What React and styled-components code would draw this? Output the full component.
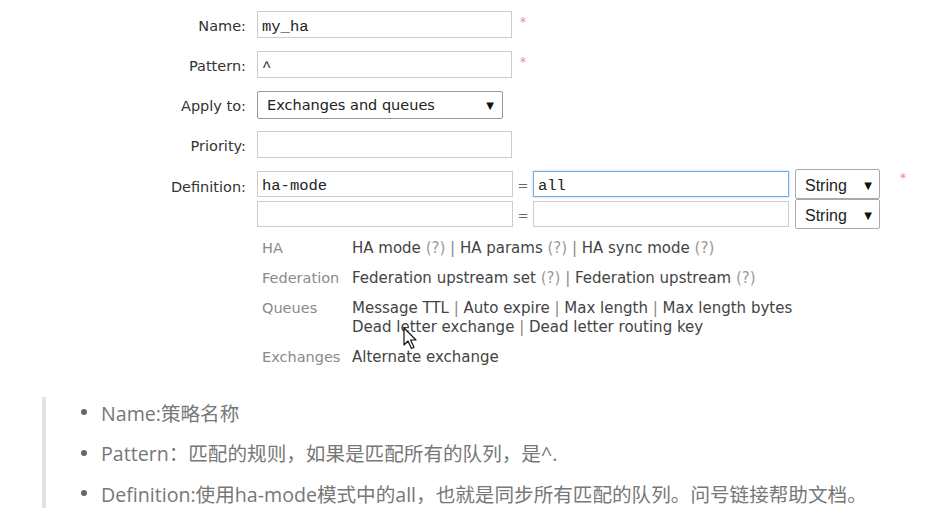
import React from "react";
import styled, { createGlobalStyle } from "styled-components";

const helpRows = [
  {
    cat: "HA",
    lines: [
      [
        ["HA mode", true],
        ["HA params", true],
        ["HA sync mode", true]
      ]
    ]
  },
  {
    cat: "Federation",
    lines: [
      [
        ["Federation upstream set", true],
        ["Federation upstream", true]
      ]
    ]
  },
  {
    cat: "Queues",
    lines: [
      [["Message TTL"], ["Auto expire"], ["Max length"], ["Max length bytes"]],
      [["Dead letter exchange"], ["Dead letter routing key"]]
    ]
  },
  { cat: "Exchanges", lines: [[["Alternate exchange"]]] }
];

const notes = [
  "Name:策略名称",
  "Pattern：匹配的规则，如果是匹配所有的队列，是^.",
  "Definition:使用ha-mode模式中的all，也就是同步所有匹配的队列。问号链接帮助文档。"
];

function HelpLine({ links }) {
  return (
    <Line>
      {links.map(([text, help], i) => (
        <React.Fragment key={text}>
          {i > 0 && <Sep> | </Sep>}
          <span>
            {text}
            {help && <Hint> (?)</Hint>}
          </span>
        </React.Fragment>
      ))}
    </Line>
  );
}

function Cursor() {
  return (
    <CursorIcon width="16" height="24" viewBox="0 0 16 24">
      <path
        d="M1 1 L1 18 L5 14 L8.5 21.5 L11 20.3 L7.6 13 L13 13 Z"
        fill="#fff"
        stroke="#111"
        strokeWidth="1.2"
        strokeLinejoin="round"
      />
    </CursorIcon>
  );
}

export default function App() {
  return (
    <Page>
      <GlobalStyle />
      <Form>
        <Row>
          <Label>Name:</Label>
          <TextInput defaultValue="my_ha" />
          <Required>*</Required>
        </Row>
        <Row>
          <Label>Pattern:</Label>
          <TextInput defaultValue="^" />
          <Required>*</Required>
        </Row>
        <Row>
          <Label>Apply to:</Label>
          <Select>
            <span>Exchanges and queues</span>
            <Arrow>▼</Arrow>
          </Select>
        </Row>
        <Row>
          <Label>Priority:</Label>
          <TextInput defaultValue="" />
        </Row>
        <DefRow>
          <DefLabel>Definition:</DefLabel>
          <DefLines>
            <DefLine>
              <PairInput defaultValue="ha-mode" />
              <Eq>=</Eq>
              <PairInput defaultValue="all" $focused />
              <TypeSelect>
                <span>String</span>
                <Arrow>▼</Arrow>
              </TypeSelect>
              <Required $wide>*</Required>
            </DefLine>
            <DefLine>
              <PairInput defaultValue="" />
              <Eq>=</Eq>
              <PairInput defaultValue="" />
              <TypeSelect>
                <span>String</span>
                <Arrow>▼</Arrow>
              </TypeSelect>
            </DefLine>
          </DefLines>
        </DefRow>
        <Help>
          {helpRows.map((r) => (
            <React.Fragment key={r.cat}>
              <Category>{r.cat}</Category>
              <Links>
                {r.lines.map((l, i) => (
                  <HelpLine key={i} links={l} />
                ))}
              </Links>
            </React.Fragment>
          ))}
        </Help>
      </Form>
      <Notes>
        {notes.map((n) => (
          <Note key={n}>{n}</Note>
        ))}
      </Notes>
      <Cursor />
    </Page>
  );
}

const GlobalStyle = createGlobalStyle`
  body {
    margin: 0;
    background: #fff;
    font-family: "DejaVu Sans", Verdana, sans-serif;
  }
`;

const Page = styled.div`
  position: relative;
  width: 933px;
  height: 522px;
  overflow: hidden;
`;

const Form = styled.div`
  display: flex;
  flex-direction: column;
  gap: 13px;
  padding-top: 11px;
`;

const Row = styled.div`
  display: flex;
  align-items: center;
  height: 27px;
`;

const Label = styled.label`
  box-sizing: border-box;
  width: 246px;
  margin-right: 11px;
  padding-top: 4px;
  text-align: right;
  font-size: 14.5px;
  color: #333;
  line-height: 27px;
`;

const TextInput = styled.input.attrs({ type: "text" })`
  box-sizing: border-box;
  width: 255px;
  height: 27px;
  margin: 0;
  padding: 4px 4px 0;
  border: 1px solid #ccc;
  border-radius: 0;
  outline: none;
  font-family: "Liberation Mono", monospace;
  font-size: 15.5px;
  color: #222;
  background: #fff;
`;

const Required = styled.span`
  align-self: flex-start;
  margin-left: ${(p) => (p.$wide ? "20px" : "8px")};
  margin-top: ${(p) => (p.$wide ? "2px" : "4px")};
  font-size: 12px;
  color: #e88;
`;

const Select = styled.div`
  box-sizing: border-box;
  display: flex;
  align-items: center;
  justify-content: space-between;
  width: 246px;
  height: 28px;
  padding: 1px 8px 0 9px;
  border: 1px solid #999;
  border-radius: 2px;
  font-size: 14.5px;
  color: #222;
  background: #fff;
`;

const Arrow = styled.span`
  font-family: "DejaVu Sans", sans-serif;
  font-size: 10px;
  color: #111;
`;

const DefRow = styled.div`
  display: flex;
  align-items: flex-start;
  margin-top: -2px;
`;

const DefLabel = styled(Label)`
  line-height: 30px;
  padding-top: 3px;
`;

const DefLines = styled.div`
  display: flex;
  flex-direction: column;
`;

const DefLine = styled.div`
  display: flex;
  align-items: center;
  height: 30px;
`;

const PairInput = styled(TextInput)`
  width: 256px;
  height: 26px;
  border-color: ${(p) => (p.$focused ? "#7fa7e6" : "#ccc")};
  box-shadow: ${(p) => (p.$focused ? "0 0 2px #a9c4f0" : "none")};
`;

const Eq = styled.span`
  width: 20px;
  padding-top: 2px;
  text-align: center;
  font-size: 13px;
  color: #666;
`;

const TypeSelect = styled.div`
  box-sizing: border-box;
  display: flex;
  align-items: center;
  justify-content: space-between;
  width: 85px;
  height: 30px;
  margin-left: 6px;
  padding: 3px 7px 0 9px;
  border: 1px solid #aaa;
  border-radius: 2px;
  font-family: "Liberation Sans", Arial, sans-serif;
  font-size: 16px;
  color: #222;
  background: #fff;
`;

const Help = styled.div`
  display: grid;
  grid-template-columns: 90px 470px;
  row-gap: 11px;
  margin: -3px 0 0 262px;
  font-size: 14.5px;
  line-height: 19px;
`;

const Category = styled.div`
  color: #8a8a8a;
  white-space: nowrap;
`;

const Links = styled.div`
  color: #444;
  font-size: 15px;
`;

const Line = styled.div`
  white-space: nowrap;
`;

const Hint = styled.span`
  color: #999;
`;

const Sep = styled.span`
  color: #888;
`;

const Notes = styled.ul`
  margin: 30px 0 0 42px;
  padding: 0 0 0 35px;
  list-style: none;
  border-left: 4px solid #e3e3e3;
  display: flex;
  flex-direction: column;
  gap: 10.5px;
`;

const Note = styled.li`
  display: flex;
  align-items: center;
  height: 30px;
  font-family: "Open Sans", "Noto Sans CJK SC", sans-serif;
  font-size: 19.6px;
  color: #777;
  white-space: nowrap;

  &::before {
    content: "";
    width: 6px;
    height: 6px;
    margin-right: 14px;
    border-radius: 50%;
    background: #666;
    flex-shrink: 0;
  }
`;

const CursorIcon = styled.svg`
  position: absolute;
  left: 403px;
  top: 327px;
`;
